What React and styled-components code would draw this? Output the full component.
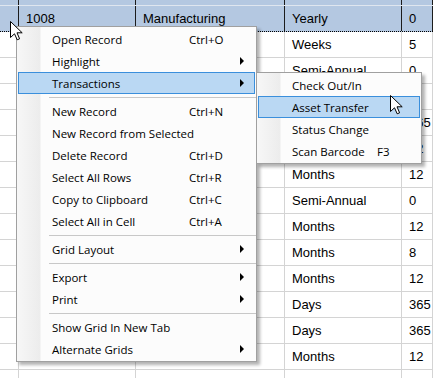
import styled, { createGlobalStyle } from "styled-components";

const GlobalStyle = createGlobalStyle`
  html, body { margin: 0; padding: 0; background: #fff; }
  body { font-family: "Liberation Sans", Arial, sans-serif; }
`;

const COLS = "19px 117px 149px 117px 1fr";

const Screen = styled.div`
  position: relative;
  width: 433px;
  height: 378px;
  overflow: hidden;
  background: #fff;
`;

const Row = styled.div`
  display: grid;
  grid-template-columns: ${COLS};
  height: ${(p) => p.$h}px;
  box-sizing: border-box;
  background: ${(p) => (p.$selected ? "#b4c8e1" : "#fff")};
  border-bottom: 1px solid ${(p) => (p.$selected ? "#dfe6ef" : "#d4d4d4")};
  ${(p) => p.$focus && "border-bottom: 1px dotted #000;"}
`;

const Cell = styled.div`
  border-right: 1px solid ${(p) => (p.$selected ? "#1c1c1c" : "#d4d4d4")};
  padding-left: 7px;
  font-size: 13px;
  line-height: 26px;
  color: #000;
  white-space: nowrap;
  overflow: hidden;
`;

const Menu = styled.div`
  position: absolute;
  left: ${(p) => p.$x}px;
  top: ${(p) => p.$y}px;
  width: ${(p) => p.$w}px;
  box-sizing: border-box;
  padding: 1px 0;
  border: 1px solid #a0a0a0;
  background: linear-gradient(to right, #f7f7f7 0, #ececec 23px, #fcfcfc 24px);
  box-shadow: 3px 3px 3px rgba(0, 0, 0, 0.3);
  font-family: "Open Sans", "Liberation Sans", sans-serif;
  font-size: 11.5px;
  color: #000;
`;

const Item = styled.div`
  display: grid;
  grid-template-columns: ${(p) => p.$keyAt}px 1fr 14px;
  align-items: center;
  height: 22px;
  margin: 0 1px;
  box-sizing: border-box;
  border: 1px solid ${(p) => (p.$active ? "#3a8fdc" : "transparent")};
  background: ${(p) => (p.$active ? "#bad8f3" : "transparent")};
  white-space: nowrap;
`;

const Label = styled.span`
  padding-left: 33px;
`;

const Shortcut = styled.span``;

const Arrow = styled.span`
  width: 0;
  height: 0;
  border-top: 4px solid transparent;
  border-bottom: 4px solid transparent;
  border-left: 4px solid #000;
`;

const Separator = styled.div`
  display: flex;
  align-items: center;
  height: 6px;
  padding-left: 32px;
  &::after {
    content: "";
    flex: 1;
    height: 1px;
    background: #c8c8c8;
  }
`;

const Cursor = styled.svg`
  position: absolute;
  left: ${(p) => p.$x}px;
  top: ${(p) => p.$y}px;
`;

// rows below the selected one; id/department sit under the open menu
const rows = [
  ["", "", "Weeks", "5"],
  ["", "", "Semi-Annual", "0"],
  ["", "", "", "0"],
  ["", "", "", "365"],
  ["", "", "", "12"],
  ["", "", "Months", "12"],
  ["", "", "Semi-Annual", "0"],
  ["", "", "Months", "12"],
  ["", "", "Months", "8"],
  ["", "", "Months", "12"],
  ["", "", "Days", "365"],
  ["", "", "Days", "365"],
  ["", "", "Months", "12"],
  ["", "", "", ""],
];

const mainMenu = [
  { label: "Open Record", key: "Ctrl+O" },
  { label: "Highlight", sub: true },
  { label: "Transactions", sub: true, active: true },
  "sep",
  { label: "New Record", key: "Ctrl+N" },
  { label: "New Record from Selected" },
  { label: "Delete Record", key: "Ctrl+D" },
  { label: "Select All Rows", key: "Ctrl+R" },
  { label: "Copy to Clipboard", key: "Ctrl+C" },
  { label: "Select All in Cell", key: "Ctrl+A" },
  "sep",
  { label: "Grid Layout", sub: true },
  "sep",
  { label: "Export", sub: true },
  { label: "Print", sub: true },
  "sep",
  { label: "Show Grid In New Tab" },
  { label: "Alternate Grids", sub: true },
];

const subMenu = [
  { label: "Check Out/In" },
  { label: "Asset Transfer", active: true },
  { label: "Status Change" },
  { label: "Scan Barcode", key: "F3" },
];

function MenuItems({ items, keyAt }) {
  return items.map((item, i) =>
    item === "sep" ? (
      <Separator key={i} />
    ) : (
      <Item key={i} $keyAt={keyAt} $active={item.active}>
        <Label>{item.label}</Label>
        <Shortcut>{item.key}</Shortcut>
        {item.sub ? <Arrow /> : <span />}
      </Item>
    )
  );
}

function Pointer({ x, y }) {
  return (
    <Cursor $x={x} $y={y} width="13" height="20" viewBox="0 0 13 20">
      <path
        d="M0.5 0.5 V16.5 L4.5 12.8 L7.2 18.8 L9.6 17.8 L7 11.8 H12.2 Z"
        fill="#fff"
        stroke="#000"
        strokeWidth="1"
        strokeLinejoin="miter"
      />
    </Cursor>
  );
}

export default function App() {
  return (
    <Screen>
      <GlobalStyle />
      <Row $h={6} $selected>
        <Cell $selected />
        <Cell $selected />
        <Cell $selected />
        <Cell $selected />
        <Cell $selected />
      </Row>
      <Row $h={26} $selected $focus>
        <Cell $selected />
        <Cell $selected>1008</Cell>
        <Cell $selected>Manufacturing</Cell>
        <Cell $selected>Yearly</Cell>
        <Cell $selected>0</Cell>
      </Row>
      {rows.map((r, i) => (
        <Row key={i} $h={26}>
          <Cell />
          {r.map((v, j) => (
            <Cell key={j}>{v}</Cell>
          ))}
        </Row>
      ))}

      <Menu $x={16} $y={26} $w={241}>
        <MenuItems items={mainMenu} keyAt={170} />
      </Menu>
      <Menu $x={256} $y={72} $w={166}>
        <MenuItems items={subMenu} keyAt={118} />
      </Menu>

      <Pointer x={10} y={21} />
      <Pointer x={390} y={95} />
    </Screen>
  );
}
